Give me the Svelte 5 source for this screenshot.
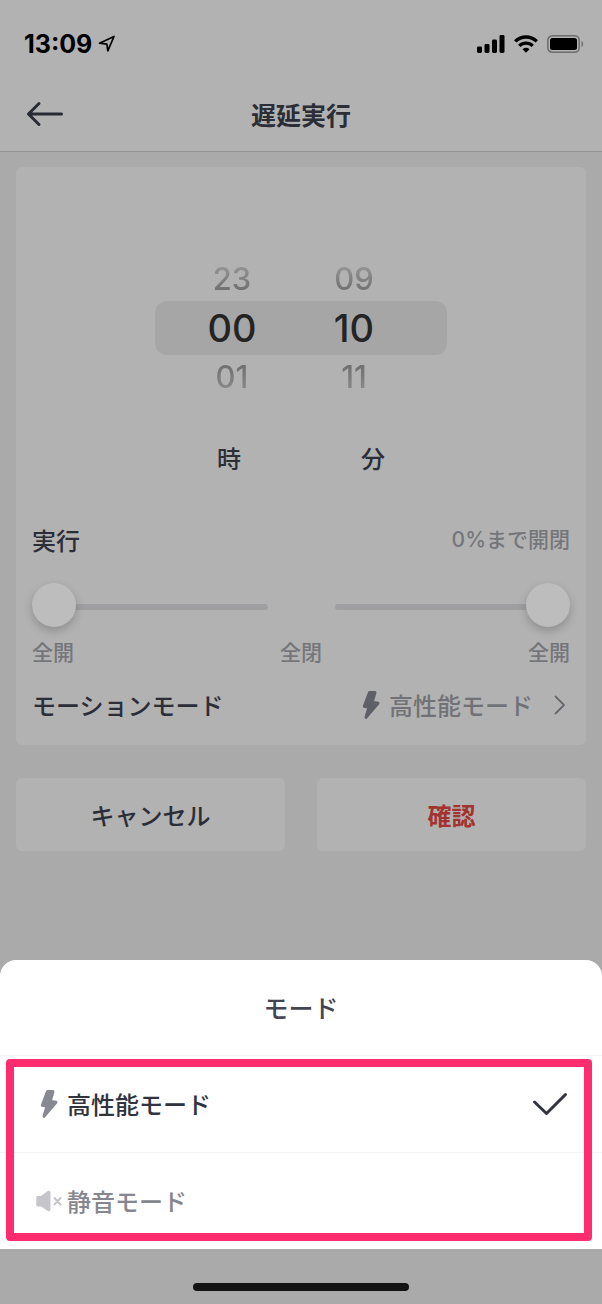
<script lang="ts">
  type Mode = {
    id: string;
    label: string;
  };

  const modes: Mode[] = [
    { id: 'performance', label: '高性能モード' },
    { id: 'silent', label: '静音モード' }
  ];

  let mode = $state('performance');
  let hour = $state(0);
  let minute = $state(10);
  let left = $state(0);
  let right = $state(100);

  let modeLabel = $derived(modes.find((m) => m.id === mode)?.label);

  // Wrap around and pad to two digits
  function pad(value: number, max: number) {
    return String((value + max) % max).padStart(2, '0');
  }
</script>

{#snippet bolt()}
  <svg class="bolt" width="18" height="30" viewBox="0 0 18 30" aria-hidden="true">
    <path d="M7.500 2.500H13L10.300 12.200 16 13.300 4 27.300 7 17.200 2.300 16.200z" stroke-width="3" stroke-linejoin="round" />
  </svg>
{/snippet}

<div class="screen">
  <div class="status">
    <span class="time">13:09</span>
    <svg width="18" height="18" viewBox="0 0 18 18" aria-hidden="true">
      <path d="M1.500 8.200 16 1.500 9.800 15.800 8.900 9.200z" fill="none" stroke="#000" stroke-width="1.700" stroke-linejoin="round" />
    </svg>
    <div class="signals">
      <svg width="28" height="18" viewBox="0 0 28 18" aria-hidden="true">
        <rect x="0" y="11.500" width="5" height="6.500" rx="1.400" />
        <rect x="7.500" y="9" width="5" height="9" rx="1.400" />
        <rect x="15" y="4.500" width="5" height="13.500" rx="1.400" />
        <rect x="22.500" y="0" width="5" height="18" rx="1.400" />
      </svg>
      <svg width="24" height="18" viewBox="0 0 24 18" aria-hidden="true">
        <g fill="none" stroke="#000" stroke-width="3.300">
          <path d="M1.200 6.400a15.400 15.400 0 0 1 21.600 0" />
          <path d="M5.300 10.900a9.500 9.500 0 0 1 13.400 0" />
        </g>
        <path d="M8.500 14.300a4.900 4.900 0 0 1 7 0L12 17.800z" />
      </svg>
      <svg width="37" height="18" viewBox="0 0 37 18" aria-hidden="true">
        <rect x=".8" y=".8" width="31.400" height="16.400" rx="4.500" fill="none" stroke="#6c6c6c" stroke-width="1.500" />
        <rect x="3" y="3" width="27" height="12" rx="2.500" />
        <path d="M34.500 6v6c2.200-.9 2.200-5.100 0-6z" fill="#6c6c6c" />
      </svg>
    </div>
  </div>

  <header>
    <button class="back" aria-label="戻る">
      <svg width="38" height="26" viewBox="0 0 38 26" aria-hidden="true">
        <path d="M35.500 13H2.500M13 2.500 2.500 13 13 23.500" fill="none" stroke="#292b35" stroke-width="3" stroke-linecap="round" stroke-linejoin="round" />
      </svg>
    </button>
    <h1>遅延実行</h1>
  </header>

  <main>
    <section class="card">
      <div class="picker">
        <div class="column">
          <button onclick={() => (hour = (hour + 23) % 24)}>{pad(hour - 1, 24)}</button>
          <output>{pad(hour, 24)}</output>
          <button class="below" onclick={() => (hour = (hour + 1) % 24)}>{pad(hour + 1, 24)}</button>
        </div>
        <div class="column">
          <button onclick={() => (minute = (minute + 59) % 60)}>{pad(minute - 1, 60)}</button>
          <output>{pad(minute, 60)}</output>
          <button class="below" onclick={() => (minute = (minute + 1) % 60)}>{pad(minute + 1, 60)}</button>
        </div>
      </div>
      <div class="units">
        <span>時</span>
        <span>分</span>
      </div>

      <div class="row run">
        <h2>実行</h2>
        <span class="amount">0%まで開閉</span>
      </div>

      <div class="sliders">
        <input type="range" min="0" max="100" bind:value={left} aria-label="左の開閉" />
        <input type="range" min="0" max="100" bind:value={right} aria-label="右の開閉" />
      </div>
      <div class="row scale">
        <span>全開</span>
        <span>全閉</span>
        <span>全開</span>
      </div>

      <div class="row motion">
        <h2>モーションモード</h2>
        <button class="current">
          {@render bolt()}
          <span>{modeLabel}</span>
          <svg class="chevron" width="12" height="20" viewBox="0 0 12 20" aria-hidden="true">
            <path d="M1.500 1.500 10 10l-8.500 8.500" fill="none" stroke="#68696e" stroke-width="1.800" stroke-linecap="round" stroke-linejoin="round" />
          </svg>
        </button>
      </div>
    </section>

    <div class="actions">
      <button>キャンセル</button>
      <button class="confirm">確認</button>
    </div>
  </main>

  <!-- Bottom sheet with the mode choice -->
  <div class="bottom">
    <div class="sheet" role="dialog" aria-labelledby="sheet-title">
      <h2 id="sheet-title">モード</h2>
      <div class="options">
        {#each modes as item}
          <label class:selected={mode === item.id}>
            <input type="radio" name="mode" value={item.id} bind:group={mode} />
            <span class="icon">
              {#if item.id === 'performance'}
                {@render bolt()}
              {:else}
                <svg width="26" height="22" viewBox="0 0 26 22" aria-hidden="true">
                  <path d="M2 6h3l6.500-4.700c1.600-1 3-.5 3 1.200v17c0 1.700-1.400 2.200-3 1.200L5 16.500H2c-1.200 0-1.700-.5-1.700-1.700v-7C.3 6.500.8 6 2 6z" />
                  <path d="m18.500 8 6 6.500m0-6.500-6 6.500" fill="none" stroke="#c5c5cb" stroke-width="2" stroke-linecap="round" />
                </svg>
              {/if}
            </span>
            <span>{item.label}</span>
            {#if mode === item.id}
              <svg class="check" width="36" height="24" viewBox="0 0 36 24" aria-hidden="true">
                <path d="M2.500 10 14.500 21.500 33.500 2.500" fill="none" stroke="#31333e" stroke-width="3" stroke-linecap="round" stroke-linejoin="round" />
              </svg>
            {/if}
          </label>
        {/each}
        <div class="highlight"></div>
      </div>
    </div>
    <div class="home"></div>
  </div>
</div>

<style>
  :global(body) {
    background: #aaa;
  }

  .screen {
    min-height: 100vh;
    color: #2b2d37;
    font-family: 'Noto Sans CJK JP', sans-serif;
    font-size: 24px;
    font-weight: 500;
    line-height: 32px;
  }

  h1,
  h2 {
    margin: 0;
    font-size: 24px;
    font-weight: 500;
  }

  button {
    padding: 0;
    border: 0;
    background: none;
    color: inherit;
    font: inherit;
    cursor: pointer;
  }

  svg {
    display: block;
    flex: none;
  }

  .status,
  .picker,
  .amount {
    font-family: Inter, 'Noto Sans CJK JP', sans-serif;
  }

  .status {
    display: flex;
    align-items: center;
    gap: 6px;
    height: 76px;
    padding: 12px 18px 0 24px;
    box-sizing: border-box;
    background: #b2b2b2;
    color: #000;
  }

  .time {
    font-size: 25px;
    font-weight: 700;
  }

  .signals {
    display: flex;
    gap: 9px;
    margin-left: auto;
  }

  header {
    display: grid;
    grid-template-columns: 1fr auto 1fr;
    align-items: center;
    height: 76px;
    padding: 0 26px;
    box-sizing: border-box;
    border-bottom: 1px solid #929292;
    background: #b2b2b2;
  }

  .back {
    justify-self: start;
  }

  h1 {
    font-size: 25px;
    font-weight: 700;
  }

  main {
    padding: 15px 16px;
  }

  .card {
    padding: 90px 16px 20px;
    border-radius: 6px;
    background: #b2b2b2;
  }

  .picker {
    position: relative;
    display: flex;
    width: 292px;
    margin: 0 auto;
    padding-left: 16px;
    box-sizing: border-box;
  }

  /* Grey band behind the middle row of the wheel */
  .picker::before {
    content: '';
    position: absolute;
    inset: 44px 0;
    border-radius: 12px;
    background: #a6a6a7;
  }

  .column {
    position: relative;
    display: grid;
    grid-template-rows: 44px 54px 44px;
    width: 122px;
    text-align: center;
  }

  .column button {
    background: linear-gradient(#929292 25%, #717171 75%);
    background-clip: text;
    color: transparent;
    font-size: 31px;
  }

  .column .below {
    background: linear-gradient(#717171 25%, #888 75%);
    background-clip: text;
  }

  .column output {
    color: #242425;
    font-size: 38px;
    line-height: 54px;
  }

  .units {
    display: grid;
    grid-template-columns: 1fr 1fr;
    width: 288px;
    margin: 43px auto 0;
    text-align: center;
  }

  .row {
    display: flex;
    align-items: center;
    justify-content: space-between;
  }

  .run {
    margin-top: 50px;
  }

  .amount,
  .scale {
    color: #75767b;
    font-size: 21px;
  }

  .sliders {
    display: grid;
    grid-template-columns: 1fr 1fr;
    gap: 67px;
    margin-top: 27px;
  }

  .sliders input {
    appearance: none;
    width: 100%;
    height: 48px;
    margin: 0;
    background: none;
  }

  .sliders input::-webkit-slider-runnable-track {
    height: 6px;
    border-radius: 3px;
    background: #9f9fa1;
  }

  .sliders input::-webkit-slider-thumb {
    appearance: none;
    width: 44px;
    height: 44px;
    margin-top: -21px;
    border-radius: 50%;
    background: #bdbdbd;
    box-shadow: 0 4px 10px rgba(0, 0, 0, 0.2);
  }

  .scale {
    margin-top: 8px;
    line-height: 24px;
  }

  .motion {
    height: 40px;
    margin-top: 22px;
  }

  .current {
    display: flex;
    align-items: center;
    gap: 9px;
    color: #717277;
  }

  .current .bolt {
    fill: #5e5f67;
    stroke: #5e5f67;
  }

  .chevron {
    margin: 0 4px 0 12px;
  }

  .actions {
    display: grid;
    grid-template-columns: 1fr 1fr;
    gap: 32px;
    margin-top: 33px;
  }

  .actions button {
    height: 73px;
    border-radius: 6px;
    background: #b2b2b2;
  }

  .actions .confirm {
    color: #a33331;
    font-weight: 700;
  }

  .bottom {
    position: fixed;
    inset: auto 0 0;
  }

  .sheet {
    border-radius: 16px 16px 0 0;
    background: #fff;
  }

  .sheet h2 {
    color: #434552;
    font-size: 25px;
    line-height: 95px;
    text-align: center;
  }

  .options {
    position: relative;
  }

  .options label {
    display: flex;
    align-items: center;
    height: 96px;
    padding: 0 34px 0 33px;
    border-top: 1px solid #f3f3f5;
    color: #85868e;
    cursor: pointer;
  }

  .options .selected {
    color: #31333e;
  }

  .options input {
    position: absolute;
    opacity: 0;
  }

  .icon {
    display: grid;
    justify-items: center;
    width: 31px;
    margin-right: 3px;
    fill: #c5c5cb;
  }

  .selected .icon {
    fill: #888991;
    stroke: #888991;
  }

  .check {
    margin-left: auto;
  }

  /* Marker frame around both options */
  .highlight {
    position: absolute;
    inset: 4px 10px 8px 6px;
    border: 8px solid #ff2d6f;
    border-radius: 4px;
    pointer-events: none;
  }

  .home {
    display: grid;
    place-items: center;
    height: 55px;
    padding-top: 21px;
    box-sizing: border-box;
    background: #aaa;
  }

  .home::after {
    content: '';
    width: 216px;
    height: 8px;
    border-radius: 4px;
    background: #141414;
  }
</style>
